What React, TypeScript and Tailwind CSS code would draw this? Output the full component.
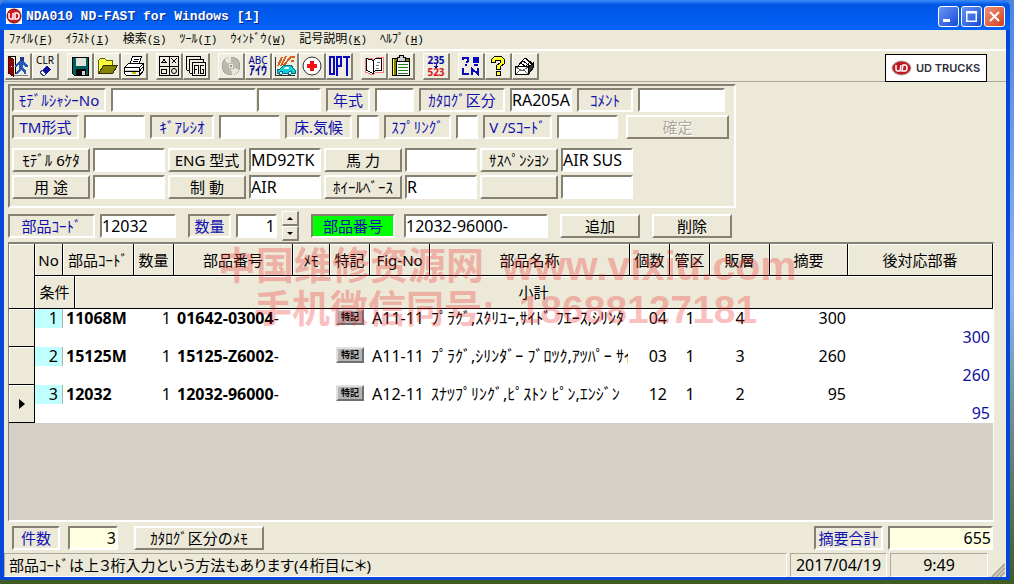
import type { ReactNode } from "react"

const SUNKEN = "border-2 border-t-[#848173] border-l-[#848173] border-r-white border-b-white"
const RAISED = "border-2 border-t-white border-l-white border-r-[#848173] border-b-[#848173]"
const JP = "font-['Noto_Sans','Noto_Sans_CJK_JP',sans-serif]"

interface FieldProps {
  id: string
  label: string
  width: string
  value?: string
  className?: string
}

function Field({ id, label, width, value = "", className = "bg-white" }: FieldProps) {
  return (
    <input
      id={id}
      aria-label={label}
      defaultValue={value}
      className={`h-6 min-w-0 text-base leading-5 text-black outline-none ${SUNKEN} ${width} ${className}`}
    />
  )
}

function Caption({ htmlFor, width, children }: { htmlFor: string; width: string; children: ReactNode }) {
  return (
    <label
      htmlFor={htmlFor}
      className={`flex h-6 items-center justify-center whitespace-nowrap text-[15px] leading-5 text-[#1010b0] ${SUNKEN} ${width}`}
    >
      {children}
    </label>
  )
}

function PushButton({
  width,
  children,
  disabled = false,
}: {
  width: string
  children?: ReactNode
  disabled?: boolean
}) {
  return (
    <button
      disabled={disabled}
      className={`flex h-6 items-center justify-center whitespace-nowrap text-[15px] leading-5 text-black disabled:text-[#aca899] disabled:[text-shadow:1px_1px_0_white] ${RAISED} ${width}`}
    >
      {children}
    </button>
  )
}

function Icon({ children }: { children: ReactNode }) {
  return (
    <svg viewBox="0 0 24 24" className="h-6 w-6" fill="none" stroke="black" strokeWidth="1" shapeRendering="crispEdges">
      {children}
    </svg>
  )
}

const toolGroups: { name: string; icon: ReactNode }[][] = [
  [
    {
      name: "Exit",
      icon: (
        <Icon>
          <path d="M1.5 2.5H9.5V20" />
          <path d="M2 3L7 5V22L2 19Z" fill="#900000" stroke="#500000" />
          <path d="M5 12H6" stroke="#fff" />
          <path d="M14 3H18V7H14Z" fill="#203890" stroke="none" />
          <path d="M13 7H18L20 10L22 11V13H19L17 11V14L20 17V20H18V18L15 16L12 20H10V18L13 15V10L11 13H9V11Z" fill="#2858b8" stroke="none" />
          <path d="M8 21.500H22" stroke="#808080" />
        </Icon>
      ),
    },
    {
      name: "Clear",
      icon: (
        <Icon>
          <text x="12" y="10" textAnchor="middle" fontSize="10" fill="black" stroke="none">CLR</text>
          <path d="M9 16L14 12L18 15L13 20Z" fill="#1010a0" stroke="none" />
          <path d="M9 16L13 20L11 22L7 19Z" fill="white" stroke="#404080" />
        </Icon>
      ),
    },
  ],
  [
    {
      name: "Save",
      icon: (
        <Icon>
          <path d="M4.500 3.500H20.500V21.500H6.500L4.500 19.500Z" fill="#006060" />
          <rect x="8" y="4" width="10" height="8" fill="#e4e4dc" stroke="none" />
          <rect x="8.500" y="15.500" width="9" height="6" fill="black" />
          <rect x="14" y="17" width="3" height="4" fill="#d8d8d0" stroke="none" />
        </Icon>
      ),
    },
    {
      name: "Open",
      icon: (
        <Icon>
          <path d="M3.500 19.500V6.500L5.500 4.500H9.500L11.500 6.500H17.500V11" fill="#ffff40" stroke="#606000" />
          <path d="M3.500 19.500L8.500 11.500H22.500L17.500 19.500Z" fill="#848400" stroke="#303000" />
        </Icon>
      ),
    },
    {
      name: "Print",
      icon: (
        <Icon>
          <path d="M8 10L10.500 2.500H19.500L17 10" fill="white" />
          <path d="M11.500 5.500H17M10.500 7.500H16" />
          <path d="M2.500 13.500L6.500 9.500H21.500V16.500L17.500 21.500H4.500L2.500 19.500Z" fill="white" />
          <path d="M2.500 13.500H17.500V21M17.500 13.500L21.500 9.500M3 17.500H17L21 13" />
          <path d="M4 16H16" stroke="#c0c0c0" />
          <path d="M10 19H14" stroke="#d0c000" strokeWidth="2" />
        </Icon>
      ),
    },
  ],
  [
    {
      name: "Figures",
      icon: (
        <Icon>
          <rect x="2.500" y="2.500" width="19" height="19" />
          <path d="M12 2V22M2 12H22" />
          <path d="M4.500 8.500L7 5.500L9.500 8.500ZM14.500 4.500L19.500 9.500M19.500 4.500L14.500 9.500M4.500 15.500H9.500V19.500H4.500Z" />
          <circle cx="17" cy="17" r="2.500" shapeRendering="auto" />
        </Icon>
      ),
    },
    {
      name: "Figure list",
      icon: (
        <Icon>
          <path d="M2.500 16V2.500H16.500V5" />
          <path d="M5.500 19V5.500H19.500V8" />
          <path d="M2.500 16H5M5.500 19H8" />
          <rect x="8.500" y="8.500" width="13" height="13" fill="#f4f2e8" />
          <path d="M10.500 20V11.500H13.500M10.500 15.500H12.500M14.500 11V20M20 11.500H16.500V19.500H19.500V15.500H18" />
        </Icon>
      ),
    },
  ],
  [
    {
      name: "Disc",
      icon: (
        <Icon>
          <circle cx="12" cy="12" r="9" fill="#bbb9ad" stroke="#aaa89c" />
          <path d="M12 12L5 6A9 9 0 0 1 12 3ZM12 12L20 16A9 9 0 0 1 13 21Z" fill="#e8e6dc" stroke="none" />
          <circle cx="12" cy="12" r="3" fill="#ece9d8" stroke="#bbb" />
          <circle cx="12" cy="12" r="1" fill="#999" stroke="none" />
        </Icon>
      ),
    },
    {
      name: "Name index",
      icon: (
        <Icon>
          <text x="12" y="10" textAnchor="middle" fontSize="10" fill="#000090" stroke="none">ABC</text>
          <text x="12" y="21" textAnchor="middle" fontSize="12" fontWeight="bold" fill="#000090" stroke="none">ｱｲｳ</text>
        </Icon>
      ),
    },
    {
      name: "Vehicle",
      icon: (
        <Icon>
          <path d="M2.500 3V21.500H22" stroke="#303030" />
          <path d="M5 12L9 3M8 12L13 2M11 11L17 4M14 7L18 3H22M18 7H21" stroke="#d86020" strokeWidth="2" />
          <path d="M4 19V16L7 15L11 11H18L20 14L22 16V19Z" fill="#10d0e0" stroke="#087080" />
          <path d="M12 13H16V15H11Z" fill="#e8ffff" stroke="none" />
          <circle cx="8" cy="19" r="1.500" fill="#e8ffff" stroke="#007080" />
          <circle cx="17" cy="19" r="1.500" fill="#e8ffff" stroke="#007080" />
        </Icon>
      ),
    },
    {
      name: "First aid",
      icon: (
        <Icon>
          <circle cx="12" cy="12" r="9" fill="white" stroke="#303030" shapeRendering="auto" />
          <path d="M10 7H14V10H17V14H14V17H10V14H7V10H10Z" fill="#f01010" stroke="none" />
        </Icon>
      ),
    },
    {
      name: "Options",
      icon: (
        <Icon>
          <path d="M3 3H7V20H3ZM10 22V3H14V12H10M16 3H23M20 3V22" stroke="#0808c0" strokeWidth="2" />
        </Icon>
      ),
    },
  ],
  [
    {
      name: "Manual",
      icon: (
        <Icon>
          <path d="M3 4H9L12 6L15 3H21V18H14L11 21L3 18Z" fill="#fff" stroke="#f08080" />
          <path d="M4.500 4.500L11.500 6.500V19.500L4.500 16.500ZM11.500 6.500L13.500 4.500H19.500V16.500H13.500L11.500 18.500" fill="white" />
          <path d="M15 8.500H18M14 11.500H17M14 14.500H17" stroke="#808080" />
        </Icon>
      ),
    },
    {
      name: "Clipboard",
      icon: (
        <Icon>
          <rect x="3.500" y="4.500" width="17" height="17" fill="#808000" />
          <path d="M4.500 5V21" stroke="#ffff20" />
          <rect x="7.500" y="7.500" width="13" height="14" fill="#fff" />
          <path d="M8 3.500H10V1.500H14V3.500H16V7.500H8Z" fill="#d0d0d0" />
          <path d="M9 10.500H19M9 13.500H19M9 16.500H19M9 19.500H19" stroke="#208020" />
        </Icon>
      ),
    },
  ],
  [
    {
      name: "Renumber",
      icon: (
        <Icon>
          <text x="12" y="10" textAnchor="middle" fontSize="10" fontWeight="bold" fill="#0808a0" stroke="none">235</text>
          <text x="12" y="22" textAnchor="middle" fontSize="10" fontWeight="bold" fill="#d81818" stroke="none">523</text>
          <path d="M12 10V12M10 12H14L12 14Z" fill="#0808a0" stroke="#0808a0" />
        </Icon>
      ),
    },
  ],
  [
    {
      name: "Line help",
      icon: (
        <Icon>
          <path d="M4 6V4H9V7L7 9M7 10V12" stroke="#0808c0" strokeWidth="2" />
          <circle cx="17" cy="6" r="3.500" fill="#0808c0" stroke="none" />
          <path d="M15 11H19" stroke="#0808c0" strokeWidth="2" />
          <path d="M4 14V20H10M13 21V15L19 20V14" stroke="#0808c0" strokeWidth="2" />
        </Icon>
      ),
    },
    {
      name: "Help",
      icon: (
        <Icon>
          <path d="M5.500 8.500V5.500L8.500 2.500H15.500L18.500 5.500V9.500L14.500 12.500V15.500H10.500V11.500L14.500 8.500V6.500H9.500V8.500Z" fill="#ffff20" />
          <rect x="10.500" y="17.500" width="4" height="4" fill="#ffff20" />
        </Icon>
      ),
    },
    {
      name: "Mail",
      icon: (
        <Icon>
          <path d="M5 12L12 4L20 10L15 16" fill="white" />
          <path d="M8 9L15 15M10 7L17 12M13 5L20 11M12 13L18 7" />
          <path d="M15.500 13L20 9.500V14L15.500 20.500" fill="#303030" />
          <path d="M2.500 12.500H15.500V20.500H2.500Z" fill="white" />
          <path d="M3 13L9 17L15 13M3 20L7 16M15 20L11 16" stroke="#606060" />
        </Icon>
      ),
    },
  ],
]

const menus = [
  ["ﾌｧｲﾙ", "F"],
  ["ｲﾗｽﾄ", "I"],
  ["検索", "S"],
  ["ﾂｰﾙ", "T"],
  ["ｳｨﾝﾄﾞｳ", "W"],
  ["記号説明", "K"],
  ["ﾍﾙﾌﾟ", "H"],
]

const parts = [
  { no: 1, code: "11068M", qty: 1, part: "01642-03004", fig: "A11-11", name: "ﾌﾟﾗｸﾞ,ｽｸﾘﾕｰ,ｻｲﾄﾞ ﾌｴｰｽ,ｼﾘﾝﾀ", count: "04", area: 1, layer: 4, price: 300 },
  { no: 2, code: "15125M", qty: 1, part: "15125-Z6002", fig: "A11-11", name: "ﾌﾟﾗｸﾞ,ｼﾘﾝﾀﾞｰ ﾌﾞﾛﾂｸ,ｱﾂﾊﾟｰ ｻｲﾄ", count: "03", area: 1, layer: 3, price: 260 },
  { no: 3, code: "12032", qty: 1, part: "12032-96000", fig: "A12-11", name: "ｽﾅﾂﾌﾟﾘﾝｸﾞ,ﾋﾟｽﾄﾝ ﾋﾟﾝ,ｴﾝｼﾞﾝ", count: "12", area: 1, layer: 2, price: 95 },
]

function TitleBar() {
  const control = "flex h-[21px] w-[21px] items-center justify-center rounded-[3px] border border-white"
  return (
    <header className="flex h-[30px] items-center rounded-t-lg bg-linear-to-b from-[#3a8cf6] via-[#0055e5] via-15% to-[#0463f8] pl-1.5 pr-[5px] pt-0.5">
      <svg viewBox="0 0 16 16" className="h-4 w-4 bg-white">
        <circle cx="8" cy="8" r="7" fill="#d81820" stroke="#701010" />
        <path d="M3 5V9Q3 11 5 11H7V5M9 5V11H11Q13 11 13 8T11 5Z" fill="none" stroke="white" strokeWidth="1.500" />
      </svg>
      <h1 className="ml-1 flex-1 whitespace-pre pt-0.5 font-['Liberation_Mono',monospace] text-[13px] font-bold text-white [text-shadow:1px_1px_0_#0a2a80]">
        NDA010 ND-FAST for Windows [1]
      </h1>
      <div className="flex gap-0.5">
        <button aria-label="Minimize" className={`${control} bg-linear-to-br from-[#6b94f0] to-[#1748d8]`}>
          <svg viewBox="0 0 19 19" className="h-[19px] w-[19px]"><rect x="4" y="12" width="7" height="3" fill="white" /></svg>
        </button>
        <button aria-label="Maximize" className={`${control} bg-linear-to-br from-[#6b94f0] to-[#1748d8]`}>
          <svg viewBox="0 0 19 19" className="h-[19px] w-[19px]"><path d="M4 4H15V15H4ZM5.500 6.500V13.500H13.500V6.500Z" fill="white" fillRule="evenodd" /></svg>
        </button>
        <button aria-label="Close" className={`${control} bg-linear-to-br from-[#f0907a] to-[#d03c10]`}>
          <svg viewBox="0 0 19 19" className="h-[19px] w-[19px]"><path d="M5 5L14 14M14 5L5 14" stroke="white" strokeWidth="2" /></svg>
        </button>
      </div>
    </header>
  )
}

function Toolbar() {
  return (
    <div className="flex h-[31px] items-start border-b border-[#aca899] pl-px pr-[19px] pt-0.5">
      <div className="flex flex-1 gap-2">
        {toolGroups.map((group, index) => (
          <div key={index} className="flex">
            {group.map((tool) => (
              <button
                key={tool.name}
                aria-label={tool.name}
                className="flex h-[27px] w-[27px] items-center justify-center border border-b-2 border-r-2 border-white border-b-[#848173] border-r-[#848173] bg-[#efece0]"
              >
                {tool.icon}
              </button>
            ))}
          </div>
        ))}
      </div>
      <div className="mt-px flex h-7 w-[102px] shrink-0 items-center gap-1 border border-black bg-white pl-[5px]">
        <svg viewBox="0 0 21 16" className="h-4 w-[21px] shrink-0">
          <ellipse cx="10.500" cy="8" rx="10" ry="7.500" fill="#b5b5b5" />
          <ellipse cx="10.500" cy="8" rx="9" ry="6.500" fill="#c01820" />
          <path d="M5 5V9Q5 11 7 11H9L10 5M12 5L11 11H14Q16 11 16 8T14 5Z" fill="none" stroke="white" strokeWidth="1.500" />
        </svg>
        <span className="whitespace-nowrap font-['Inter',sans-serif] text-[11px] font-semibold text-[#303038]">UD TRUCKS</span>
      </div>
    </div>
  )
}

function ModelForm() {
  return (
    <section className={`ml-1 mt-0.5 w-fit pb-[7px] pl-0.5 pr-[5px] pt-0.5 ${SUNKEN}`}>
      <div className="flex gap-[5px]">
        <Caption htmlFor="chassis" width="w-[94px]">ﾓﾃﾞﾙｼｬｼｰNo</Caption>
        <div className="flex gap-px">
          <Field id="chassis" label="ﾓﾃﾞﾙｼｬｼｰNo" width="w-[145px]" />
          <Field id="chassis-sub" label="ﾓﾃﾞﾙｼｬｼｰNo 2" width="w-16" />
        </div>
        <Caption htmlFor="year" width="w-11">年式</Caption>
        <Field id="year" label="年式" width="w-[39px]" />
        <Caption htmlFor="catalog" width="w-[86px]">ｶﾀﾛｸﾞ区分</Caption>
        <Field id="catalog" label="ｶﾀﾛｸﾞ区分" width="w-[62px]" value="RA205A" />
        <Caption htmlFor="comment" width="w-14">ｺﾒﾝﾄ</Caption>
        <Field id="comment" label="ｺﾒﾝﾄ" width="w-[87px]" />
      </div>
      <div className="mt-[3px] flex gap-[5px]">
        <Caption htmlFor="tm" width="w-[67px]">TM形式</Caption>
        <Field id="tm" label="TM形式" width="w-[61px]" />
        <Caption htmlFor="gear" width="w-16">ｷﾞｱﾚｼｵ</Caption>
        <Field id="gear" label="ｷﾞｱﾚｼｵ" width="w-[61px]" />
        <Caption htmlFor="floor" width="w-[67px]">床.気候</Caption>
        <Field id="floor" label="床.気候" width="w-[22px]" />
        <Caption htmlFor="spring" width="w-[67px]">ｽﾌﾟﾘﾝｸﾞ</Caption>
        <Field id="spring" label="ｽﾌﾟﾘﾝｸﾞ" width="w-[22px]" />
        <Caption htmlFor="vs" width="w-[69px]">V /Sｺｰﾄﾞ</Caption>
        <Field id="vs" label="V/Sｺｰﾄﾞ" width="w-[61px]" />
        <div className="pl-[3px]">
          <PushButton width="w-[103px]" disabled>確定</PushButton>
        </div>
      </div>
      <div className="mt-[9px] grid w-fit grid-cols-[repeat(4,78px_72px)] gap-[3px]">
        <PushButton width="w-full">ﾓﾃﾞﾙ 6ｹﾀ</PushButton>
        <Field id="model6" label="ﾓﾃﾞﾙ 6ｹﾀ" width="w-full" />
        <PushButton width="w-full">ENG 型式</PushButton>
        <Field id="engine" label="ENG 型式" width="w-full" value="MD92TK" />
        <PushButton width="w-full">馬 力</PushButton>
        <Field id="power" label="馬力" width="w-full" />
        <PushButton width="w-full">ｻｽﾍﾟﾝｼﾖﾝ</PushButton>
        <Field id="suspension" label="ｻｽﾍﾟﾝｼﾖﾝ" width="w-full" value="AIR SUS" />
        <PushButton width="w-full">用 途</PushButton>
        <Field id="usage" label="用途" width="w-full" />
        <PushButton width="w-full">制 動</PushButton>
        <Field id="brake" label="制動" width="w-full" value="AIR" />
        <PushButton width="w-full">ﾎｲｰﾙﾍﾞｰｽ</PushButton>
        <Field id="wheelbase" label="ﾎｲｰﾙﾍﾞｰｽ" width="w-full" value="R" />
        <PushButton width="w-full" />
        <Field id="extra" label="その他" width="w-full" />
      </div>
    </section>
  )
}

function PartEntry() {
  const spin = "flex h-[15px] w-[17px] items-center justify-center border border-b-2 border-r-2 border-white border-b-[#848173] border-r-[#848173]"
  return (
    <section className="ml-1 mt-[3px] flex h-[30px] items-center gap-3">
      <div className="flex gap-[5px]">
        <Caption htmlFor="part-code" width="w-[87px]">部品ｺｰﾄﾞ</Caption>
        <Field id="part-code" label="部品ｺｰﾄﾞ" width="w-[76px]" value="12032" />
      </div>
      <div className="flex items-center gap-[5px]">
        <Caption htmlFor="qty" width="w-[43px]">数量</Caption>
        <Field id="qty" label="数量" width="w-[41px]" value="1" className="bg-white text-right" />
        <div>
          <button aria-label="Increase" className={spin}>
            <svg viewBox="0 0 6 3" className="h-[3px] w-1.5"><path d="M0 3L3 0L6 3Z" /></svg>
          </button>
          <button aria-label="Decrease" className={spin}>
            <svg viewBox="0 0 6 3" className="h-[3px] w-1.5"><path d="M0 0L3 3L6 0Z" /></svg>
          </button>
        </div>
      </div>
      <div className="flex gap-[9px]">
        <Caption htmlFor="part-no" width="w-[84px] bg-[#00ff00]">部品番号</Caption>
        <Field id="part-no" label="部品番号" width="w-[144px]" value="12032-96000-" />
      </div>
      <PushButton width="w-20">追加</PushButton>
      <PushButton width="w-20">削除</PushButton>
    </section>
  )
}

function PartsTable() {
  const head = "border-b border-r border-black p-0 font-normal shadow-[inset_1px_1px_0_white]"
  const marker = "border-b border-r border-black bg-[#ece9d8] p-0 shadow-[inset_1px_1px_0_white]"
  const headings = ["数量", "部品番号", "ﾒﾓ", "特記", "Fig-No", "部品名称", "個数", "管区", "販層", "摘要", "後対応部番"]

  return (
    <section className="relative ml-1 mr-3 mt-px flex-1 overflow-hidden border border-b-2 border-t-2 border-[#848173] border-b-white border-r-white bg-[#d4d0c8]">
      <table className="w-full table-fixed border-separate border-spacing-0 whitespace-nowrap text-[15px] leading-[18px]">
        <colgroup>
          <col className="w-[26px]" />
          <col className="w-7" />
          <col className="w-3" />
          <col className="w-[59px]" />
          <col className="w-10" />
          <col className="w-[119px]" />
          <col className="w-[37px]" />
          <col className="w-10" />
          <col className="w-[60px]" />
          <col className="w-[200px]" />
          <col className="w-10" />
          <col className="w-10" />
          <col className="w-[60px]" />
          <col className="w-[78px]" />
          <col />
        </colgroup>
        <thead className="bg-[#ece9d8]">
          <tr className="h-8">
            <th rowSpan={2} className={head} />
            <th className={head}>No</th>
            <th colSpan={2} className={head}>部品ｺｰﾄﾞ</th>
            {headings.map((heading) => (
              <th key={heading} className={head}>{heading}</th>
            ))}
          </tr>
          <tr className="h-[33px]">
            <th colSpan={2} className={head}>条件</th>
            <th colSpan={12} className={head}>小計</th>
          </tr>
        </thead>
        {parts.map((item) => (
          <tbody key={item.no} className="bg-white align-top text-base leading-[18px]">
            <tr className="h-[19px]">
              <td rowSpan={2} className={`${marker} align-middle`}>
                {item.no === 3 && (
                  <svg viewBox="0 0 6 10" className="mx-auto h-2.5 w-1.5"><path d="M0 0L6 5L0 10Z" /></svg>
                )}
              </td>
              <td className="border-r border-[#b0b0b0] bg-[#bfffff] p-0 pr-1 text-right">{item.no}</td>
              <td colSpan={2} className="p-0 pl-[3px] font-bold">{item.code}</td>
              <td className="p-0 pr-[3px] text-right">{item.qty}</td>
              <td className="p-0 pl-[3px]"><b>{item.part}</b>-</td>
              <td className="p-0" />
              <td className="p-0">
                <button className="mx-auto block h-4 w-7 border-2 border-[#e0e0e0] border-b-[#707070] border-r-[#707070] bg-[#b4b4b4] text-[9px] font-bold leading-3">
                  特記
                </button>
              </td>
              <td className="p-0 pl-0.5">{item.fig}</td>
              <td className="p-0 pl-px pr-0.5">
                <div className="overflow-hidden">{item.name}</div>
              </td>
              <td className="p-0 pr-[3px] text-right">{item.count}</td>
              <td className="p-0 text-center">{item.area}</td>
              <td className="p-0 text-center">{item.layer}</td>
              <td className="p-0 pr-0.5 text-right">{item.price}</td>
              <td className="p-0" />
            </tr>
            <tr className="h-[19px]">
              <td colSpan={14} className="p-0 pr-[3px] text-right text-[#1010a0]">{item.price}</td>
            </tr>
          </tbody>
        ))}
      </table>
    </section>
  )
}

function Summary() {
  return (
    <section className="ml-2 mr-[13px] flex h-[31px] items-center justify-between">
      <div className="flex items-center">
        <Caption htmlFor="rows" width="w-12">件数</Caption>
        <div className="flex gap-4 pl-2">
          <Field id="rows" label="件数" width="w-[50px]" value="3" className="bg-[#ffffe1] text-right" />
          <PushButton width="w-[130px]">ｶﾀﾛｸﾞ区分のﾒﾓ</PushButton>
        </div>
      </div>
      <div className="flex gap-[5px]">
        <Caption htmlFor="total" width="w-[69px]">摘要合計</Caption>
        <Field id="total" label="摘要合計" width="w-[105px]" value="655" className="bg-[#ffffe1] text-right" />
      </div>
    </section>
  )
}

function StatusBar() {
  const cell = "flex h-6 items-center justify-center border border-[#aca899] border-b-white border-r-white"
  return (
    <footer className="flex gap-[3px] text-base leading-5">
      <p className={`${cell} flex-1`}>
        <span className="flex-1 pl-1 text-[15px] [font-feature-settings:'palt']">
          部品ｺｰﾄﾞは上３桁入力という方法もあります(４桁目に＊)
        </span>
      </p>
      <time className={`${cell} w-[97px]`}>2017/04/19</time>
      <time className={`${cell} w-[98px]`}>9:49</time>
      <svg viewBox="0 0 14 14" className="mr-px mt-2.5 h-3.5 w-3.5" stroke="#aca899" strokeWidth="2">
        <path d="M1 14L14 1M5 14L14 5M9 14L14 9" />
      </svg>
    </footer>
  )
}

function Watermark() {
  return (
    <div
      aria-hidden="true"
      className="pointer-events-none absolute left-[214px] top-[215px] whitespace-nowrap font-['Liberation_Sans','Noto_Sans_CJK_SC',sans-serif] text-[38px] font-bold leading-[43px] text-[#f02020]/30"
    >
      <p className="flex gap-[18px]">
        <span>中国维修资源网</span>
        <span className="text-[41px]">www.vixiu.com</span>
      </p>
      <p className="flex gap-6 pl-9">
        <span>手机微信同号:</span>
        <span className="text-[39px]">18688127181</span>
      </p>
    </div>
  )
}

export default function App() {
  return (
    <div className={`flex min-h-screen flex-col bg-linear-to-b from-[#4a86e0] via-[#90b4ec] to-[#405c20] to-100% pb-1 pr-1 text-black ${JP}`}>
      <div className="flex flex-1 flex-col rounded-t-lg bg-[#0646d8]">
        <TitleBar />
        <main className="relative mx-1 mb-[3px] flex flex-1 flex-col bg-[#ece9d8]">
          <nav className="flex h-[21px] items-center gap-[13px] border-b-2 border-white pl-[5px] text-xs">
            {menus.map(([label, key]) => (
              <button key={key} className="whitespace-nowrap">
                {label}
                <span className="font-['Liberation_Mono',monospace] text-[11px]">(<u>{key}</u>)</span>
              </button>
            ))}
          </nav>
          <Toolbar />
          <ModelForm />
          <PartEntry />
          <PartsTable />
          <Summary />
          <StatusBar />
          <Watermark />
        </main>
      </div>
    </div>
  )
}
